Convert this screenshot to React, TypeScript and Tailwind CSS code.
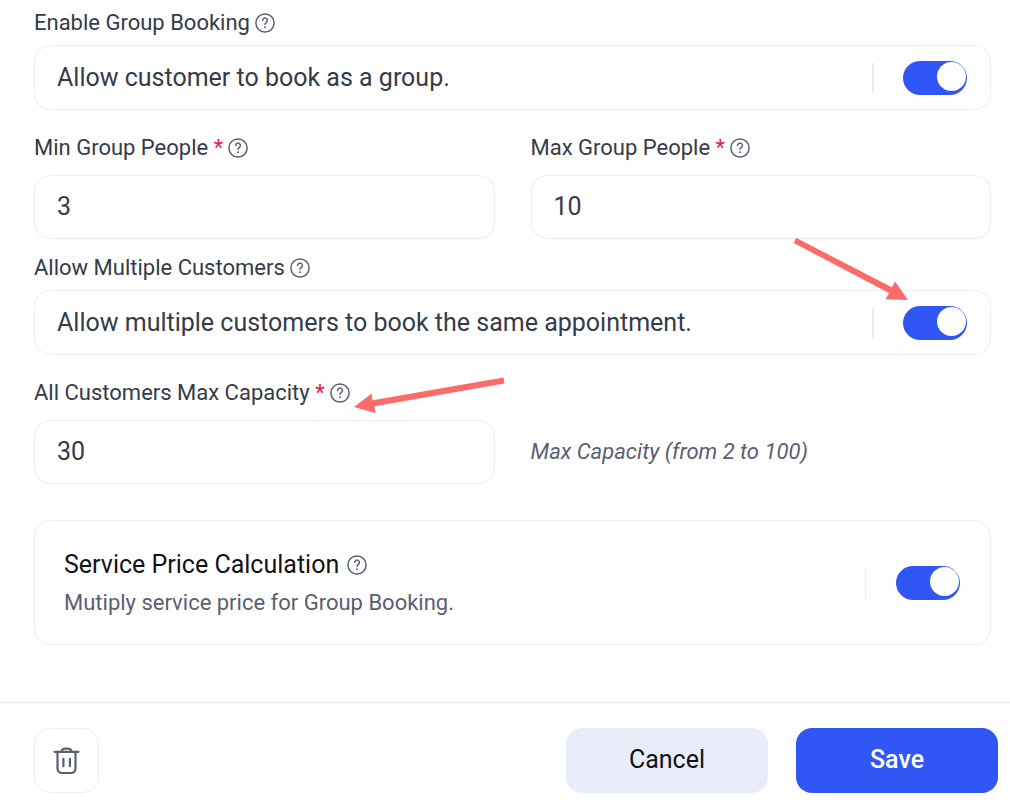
import React, { useState } from 'react';

const HelpIcon: React.FC = () => (
  <svg className="size-5 shrink-0 text-[#596072]" viewBox="0 0 20 20" fill="none" stroke="currentColor" strokeWidth="1.5" strokeLinecap="round" strokeLinejoin="round" aria-hidden="true">
    <circle cx="10" cy="10" r="9.1" />
    <path d="M7.7 7.500a2.350 2.350 0 1 1 3.700 1.900c-.9.650-1.400 1-1.400 1.900" />
    <circle cx="10" cy="14.3" r="1" fill="currentColor" stroke="none" />
  </svg>
);

const TrashIcon: React.FC = () => (
  <svg className="w-7 h-8" viewBox="0 0 28 32" fill="none" stroke="currentColor" strokeWidth="2.2" strokeLinecap="round" strokeLinejoin="round" aria-hidden="true">
    <path d="M1.500 6.800h24" />
    <path d="M8.400 6.500C9 4.500 10 3.600 11.700 3.600h3.600c1.700 0 2.700.9 3.300 2.900" />
    <path d="M4.500 6.800v16.800a4.400 4.400 0 0 0 4.400 4.400h9.200a4.400 4.400 0 0 0 4.400-4.400v-16.800" />
    <path d="M10.400 13.800v7.400M16.900 13.800v7.400" />
  </svg>
);

interface FieldLabelProps {
  htmlFor: string;
  text: string;
  required?: boolean;
}

const FieldLabel: React.FC<FieldLabelProps> = ({ htmlFor, text, required }) => (
  <div className="flex items-center gap-[5px] text-[22px] leading-[30px]">
    <label htmlFor={htmlFor}>
      {text}
      {required && <span className="text-[#e11d48]"> *</span>}
    </label>
    <HelpIcon />
  </div>
);

interface ToggleProps {
  id: string;
  checked: boolean;
  onChange: (checked: boolean) => void;
}

const Toggle: React.FC<ToggleProps> = ({ id, checked, onChange }) => (
  <input
    id={id}
    type="checkbox"
    role="switch"
    checked={checked}
    onChange={(e) => onChange(e.target.checked)}
    className="flex h-[34px] w-16 shrink-0 cursor-pointer appearance-none rounded-full bg-[#cbd2e0] px-px pt-px before:size-[29px] before:rounded-full before:bg-white before:content-[''] checked:justify-end checked:bg-[#3056f5]"
  />
);

interface ToggleRowProps extends ToggleProps {
  label: string;
  description: string;
}

const ToggleRow: React.FC<ToggleRowProps> = ({ id, label, description, checked, onChange }) => (
  <div className="flex flex-col gap-[7px]">
    <FieldLabel htmlFor={id} text={label} />
    <div className="flex h-[65px] items-center rounded-2xl border border-[#ededf0] pl-[22px] pr-[23px] text-[25px]">
      <span className="flex-1">{description}</span>
      <span className="mr-[29px] h-[30px] w-0.5 bg-[#eaecf5]" />
      <Toggle id={id} checked={checked} onChange={onChange} />
    </div>
  </div>
);

interface NumberFieldProps {
  id: string;
  label: string;
  value: string;
  onChange: (value: string) => void;
}

const NumberField: React.FC<NumberFieldProps> = ({ id, label, value, onChange }) => (
  <div className="flex min-w-0 flex-col gap-3">
    <FieldLabel htmlFor={id} text={label} required />
    <input
      id={id}
      type="text"
      inputMode="numeric"
      required
      value={value}
      onChange={(e) => onChange(e.target.value)}
      className="h-16 w-full rounded-2xl border border-[#ededf0] px-[22px] pb-0.5 text-[25px] outline-none"
    />
  </div>
);

const App: React.FC = () => {
  const [groupBooking, setGroupBooking] = useState(true);
  const [multipleCustomers, setMultipleCustomers] = useState(true);
  const [priceCalculation, setPriceCalculation] = useState(true);
  const [minPeople, setMinPeople] = useState('3');
  const [maxPeople, setMaxPeople] = useState('10');
  const [capacity, setCapacity] = useState('30');

  return (
    <div className="relative bg-white font-[Roboto,sans-serif] text-[#353b48]">
      <main className="flex flex-col pb-[57px] pl-[34px] pr-[19px] pt-2">
        <ToggleRow
          id="group-booking"
          label="Enable Group Booking"
          description="Allow customer to book as a group."
          checked={groupBooking}
          onChange={setGroupBooking}
        />

        <div className="mb-3.5 mt-[23px] grid grid-cols-2 gap-9">
          <NumberField id="min-people" label="Min Group People" value={minPeople} onChange={setMinPeople} />
          <NumberField id="max-people" label="Max Group People" value={maxPeople} onChange={setMaxPeople} />
        </div>

        <ToggleRow
          id="multiple-customers"
          label="Allow Multiple Customers"
          description="Allow multiple customers to book the same appointment."
          checked={multipleCustomers}
          onChange={setMultipleCustomers}
        />

        <div className="mb-9 mt-[23px] grid grid-cols-2 items-end gap-9">
          <NumberField id="capacity" label="All Customers Max Capacity" value={capacity} onChange={setCapacity} />
          <p className="text-[22px] italic leading-[64px] text-[#596072]">Max Capacity (from 2 to 100)</p>
        </div>

        {/* Price calculation card */}
        <section className="flex h-[125px] items-center rounded-2xl border border-[#ededf0] pl-[29px] pr-[30px]">
          <div className="flex-1">
            <div className="flex items-center gap-2 text-[25px] leading-10 text-[#111317]">
              <label htmlFor="price-calculation">Service Price Calculation</label>
              <HelpIcon />
            </div>
            <p className="text-[22px] leading-9 text-[#596072]">Mutiply service price for Group Booking.</p>
          </div>
          <span className="mr-[30px] h-[30px] w-px bg-[#eaecf0]" />
          <Toggle id="price-calculation" checked={priceCalculation} onChange={setPriceCalculation} />
        </section>
      </main>

      <footer className="flex items-center gap-7 border-t border-[#ebebee] pb-[17px] pl-[34px] pr-3 pt-[25px] text-[25px]">
        <button type="button" aria-label="Delete" className="mr-auto flex size-[65px] items-center justify-center rounded-2xl border border-[#ededf0] text-[#596072]">
          <TrashIcon />
        </button>
        <button type="button" className="h-[65px] w-[202px] rounded-2xl bg-[#e9edf9] pb-0.5 text-[#111317]">Cancel</button>
        <button type="button" className="h-[65px] w-[202px] rounded-2xl bg-[#3056f5] pb-0.5 font-medium text-white">Save</button>
      </footer>

      {/* Callout arrows drawn over the form */}
      <svg className="pointer-events-none absolute right-[102px] top-[236px] h-[66px] w-[115px]" viewBox="0 0 115 66" fill="#fc6b68" aria-hidden="true">
        <path d="M3 1.800 98.800 51.200 102 45.500 115 64 92.500 63.200 96 57 .8 7Z" />
      </svg>
      <svg className="pointer-events-none absolute left-[354px] top-[376px] h-[38px] w-[151px]" viewBox="0 0 151 38" fill="#fc6b68" aria-hidden="true">
        <path d="M149.500 1.500 18.500 24.200 17.700 17.500 0 31 21.500 37 20.500 30.300 150.500 7.500Z" />
      </svg>
    </div>
  );
};

export default App;
